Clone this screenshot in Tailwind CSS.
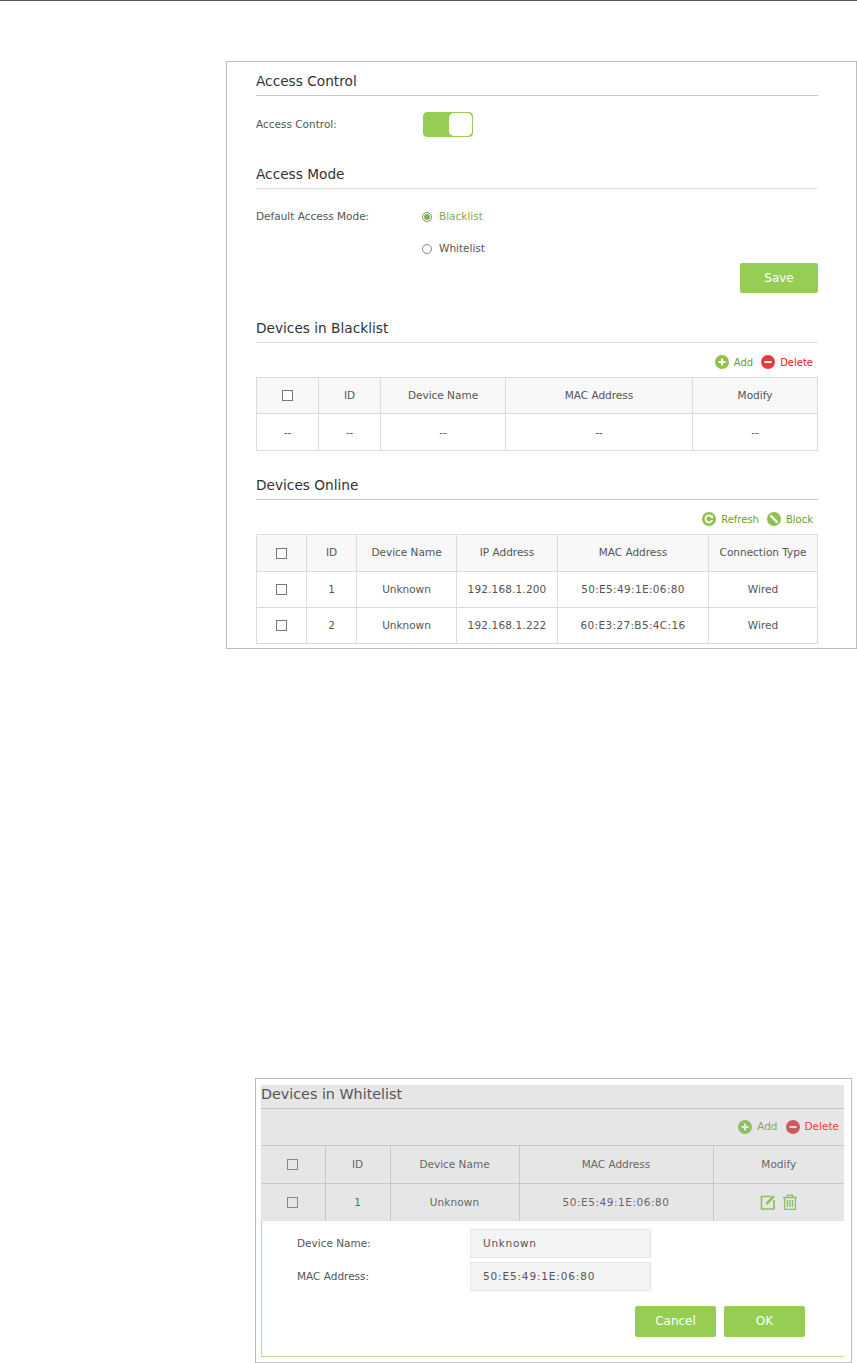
<!DOCTYPE html>
<html lang="en">
<head>
    <meta charset="UTF-8">
    <meta name="viewport" content="width=device-width, initial-scale=1.0">
    <title>Access Control</title>
    <script src="https://cdn.jsdelivr.net/npm/@tailwindcss/browser@4"></script>
</head>
<body class="bg-white w-[857px] h-[1363px] overflow-hidden font-['DejaVu_Sans',sans-serif] text-[10.5px] text-[#555]">
    <div class="h-px bg-[#555]"></div>

    <!-- first panel -->
    <section class="mt-[60px] ml-[226px] w-[631px] h-[588px] border border-[#bdbdbd] pl-[29px] pr-[38px]">
        <h2 class="h-[34px] pt-[9px] text-[13.7px] leading-[20px] text-[#333] border-b border-[#c8c8c8]">Access Control</h2>
        <div class="flex items-center mt-4 h-[25px]">
            <span class="w-[167px]">Access Control:</span>
            <div class="w-[50px] h-[25px] rounded-[4px] bg-[#95cd55] border border-[#95cd55] flex justify-end">
                <div class="w-[23px] h-full rounded-[5px] bg-white"></div>
            </div>
        </div>
        <h2 class="mt-[26px] h-[26px] pt-px text-[13.7px] leading-[20px] text-[#333] border-b border-[#dedede]">Access Mode</h2>
        <div class="flex items-center mt-[18px] h-5">
            <span class="w-[166px]">Default Access Mode:</span>
            <div class="w-[10px] h-[10px] rounded-full border border-[#888] flex items-center justify-center">
                <div class="w-[6px] h-[6px] rounded-full bg-[#7fb83e]"></div>
            </div>
            <span class="ml-[7px] text-[#7fae3c]">Blacklist</span>
        </div>
        <div class="flex items-center mt-3 h-5 pl-[166px]">
            <div class="w-[10px] h-[10px] rounded-full border border-[#888]"></div>
            <span class="ml-[7px]">Whitelist</span>
        </div>
        <div class="flex justify-end mt-1">
            <button class="w-[78px] h-[30px] rounded-[2px] bg-[#95cd55] text-white text-[12px]">Save</button>
        </div>
        <h2 class="mt-[25px] h-[25px] text-[13.7px] leading-[20px] text-[#333] border-b border-[#dedede]">Devices in Blacklist</h2>
        <div class="flex justify-end items-center h-[34px] pr-[5px] pt-1 text-[10px]">
            <svg class="w-[14px] h-[14px]" viewBox="0 0 14 14"><circle cx="7" cy="7" r="7" fill="#8fc14d"/><path d="M3.5 7h7M7 3.5v7" stroke="#fff" stroke-width="2"/></svg>
            <span class="ml-[5px] text-[#6f9f22]">Add</span>
            <svg class="ml-2 w-[14px] h-[14px]" viewBox="0 0 14 14"><circle cx="7" cy="7" r="7" fill="#e03c40"/><path d="M3.5 7h7" stroke="#fff" stroke-width="2"/></svg>
            <span class="ml-[5px] text-[#f01010]">Delete</span>
        </div>
        <table class="w-[562px] table-fixed text-center">
            <thead>
                <tr class="h-[36px] bg-[#f8f8f8]">
                    <th class="w-[62px] border border-[#dcdcdc] font-normal"><div class="w-[11px] h-[11px] mx-auto border border-[#777] bg-white"></div></th>
                    <th class="w-[62px] border border-[#dcdcdc] font-normal pt-px">ID</th>
                    <th class="w-[125px] border border-[#dcdcdc] font-normal pt-px">Device Name</th>
                    <th class="w-[187px] border border-[#dcdcdc] font-normal pt-px">MAC Address</th>
                    <th class="border border-[#dcdcdc] font-normal pt-px">Modify</th>
                </tr>
            </thead>
            <tbody>
                <tr class="h-[37px]">
                    <td class="border border-[#dcdcdc] pt-px">--</td>
                    <td class="border border-[#dcdcdc] pt-px">--</td>
                    <td class="border border-[#dcdcdc] pt-px">--</td>
                    <td class="border border-[#dcdcdc] pt-px">--</td>
                    <td class="border border-[#dcdcdc] pt-px">--</td>
                </tr>
            </tbody>
        </table>
        <h2 class="mt-6 h-[25px] text-[13.7px] leading-[20px] text-[#333] border-b border-[#c8c8c8]">Devices Online</h2>
        <div class="flex justify-end items-center h-[34px] pr-[5px] pt-1 text-[10px]">
            <svg class="w-[14px] h-[14px]" viewBox="0 0 14 14"><circle cx="7" cy="7" r="7" fill="#8fc14d"/><path d="M10.2 8.2A3.5 3.5 0 1 1 9.6 4.6" fill="none" stroke="#fff" stroke-width="1.8"/><path d="M8 5.6 11 6.2 10.8 3z" fill="#fff"/></svg>
            <span class="ml-[5px] text-[#6f9f22]">Refresh</span>
            <svg class="ml-2 w-[14px] h-[14px]" viewBox="0 0 14 14"><circle cx="7" cy="7" r="7" fill="#8fc14d"/><path d="M3.4 3.4 10.6 10.6" stroke="#fff" stroke-width="2.2"/></svg>
            <span class="ml-[5px] text-[#6f9f22]">Block</span>
        </div>
        <table class="w-[562px] table-fixed text-center">
            <thead>
                <tr class="h-[37px] bg-[#f8f8f8]">
                    <th class="w-[50px] border border-[#dcdcdc] font-normal"><div class="w-[11px] h-[11px] mx-auto border border-[#777] bg-white"></div></th>
                    <th class="w-[50px] border border-[#dcdcdc] font-normal">ID</th>
                    <th class="w-[100px] border border-[#dcdcdc] font-normal">Device Name</th>
                    <th class="w-[101px] border border-[#dcdcdc] font-normal">IP Address</th>
                    <th class="w-[151px] border border-[#dcdcdc] font-normal">MAC Address</th>
                    <th class="border border-[#dcdcdc] font-normal">Connection Type</th>
                </tr>
            </thead>
            <tbody>
                <tr class="h-[36px]">
                    <td class="border border-[#dcdcdc]"><div class="w-[11px] h-[11px] mx-auto border border-[#777] bg-white"></div></td>
                    <td class="border border-[#dcdcdc]">1</td>
                    <td class="border border-[#dcdcdc]">Unknown</td>
                    <td class="border border-[#dcdcdc] tracking-[0.15px]">192.168.1.200</td>
                    <td class="border border-[#dcdcdc] tracking-[0.35px]">50:E5:49:1E:06:80</td>
                    <td class="border border-[#dcdcdc]">Wired</td>
                </tr>
                <tr class="h-[36px]">
                    <td class="border border-[#dcdcdc]"><div class="w-[11px] h-[11px] mx-auto border border-[#777] bg-white"></div></td>
                    <td class="border border-[#dcdcdc]">2</td>
                    <td class="border border-[#dcdcdc]">Unknown</td>
                    <td class="border border-[#dcdcdc] tracking-[0.15px]">192.168.1.222</td>
                    <td class="border border-[#dcdcdc] tracking-[0.35px]">60:E3:27:B5:4C:16</td>
                    <td class="border border-[#dcdcdc]">Wired</td>
                </tr>
            </tbody>
        </table>
    </section>

    <!-- whitelist edit panel -->
    <section class="mt-[429px] ml-[255px] w-[597px] h-[285px] border border-[#bdbdbd] pt-[6px] pl-[5px] pr-[7px]">
        <div class="bg-[#e6e6e6]">
            <h2 class="h-[24px] text-[14.3px] leading-[18px] text-[#555] border-b border-[#c4c4c4]">Devices in Whitelist</h2>
            <div class="flex justify-end items-center h-[36px] pr-[5px]">
                <svg class="w-[14px] h-[14px]" viewBox="0 0 14 14"><circle cx="7" cy="7" r="7" fill="#8fbe63"/><path d="M3.5 7h7M7 3.5v7" stroke="#e6e6e6" stroke-width="2"/></svg>
                <span class="ml-[5px] text-[#86ab56]">Add</span>
                <svg class="ml-2 w-[14px] h-[14px]" viewBox="0 0 14 14"><circle cx="7" cy="7" r="7" fill="#cf5a5c"/><path d="M3.5 7h7" stroke="#e6e6e6" stroke-width="2"/></svg>
                <span class="ml-[5px] text-[#ee3a3a]">Delete</span>
            </div>
            <table class="w-[583px] table-fixed text-center text-[#666]">
                <thead>
                    <tr class="h-[38px]">
                        <th class="w-[64px] border-y border-r border-[#c8c8c8] font-normal"><div class="w-[11px] h-[11px] mx-auto border border-[#888] bg-[#e6e6e6]"></div></th>
                        <th class="w-[65px] border-y border-r border-[#c8c8c8] font-normal">ID</th>
                        <th class="w-[129px] border-y border-r border-[#c8c8c8] font-normal">Device Name</th>
                        <th class="w-[194px] border-y border-r border-[#c8c8c8] font-normal">MAC Address</th>
                        <th class="border-y border-[#c8c8c8] font-normal">Modify</th>
                    </tr>
                </thead>
                <tbody>
                    <tr class="h-[37px]">
                        <td class="border-r border-[#c8c8c8]"><div class="w-[11px] h-[11px] mx-auto border border-[#888] bg-[#e6e6e6]"></div></td>
                        <td class="border-r border-[#c8c8c8] pt-px">1</td>
                        <td class="border-r border-[#c8c8c8] pt-px tracking-[0.1px]">Unknown</td>
                        <td class="border-r border-[#c8c8c8] pt-px tracking-[0.55px]">50:E5:49:1E:06:80</td>
                        <td>
                            <div class="flex justify-center gap-[6px] pl-px">
                                <svg class="w-4 h-4" viewBox="0 0 16 16" fill="none" stroke="#8fbe63" stroke-width="1.6"><path d="M11 2.5H1.5v12.5h12.5V6"/><path d="M6.5 9.8 14 2.2" stroke-width="2.6"/></svg>
                                <svg class="w-4 h-4" viewBox="0 0 16 16" fill="none" stroke="#8fbe63" stroke-width="1.3"><path d="M1 3.5h14M5.5 3.5V1.2h5v2.3"/><path d="M2.6 3.5v11.8h10.8V3.5"/><path d="M5.5 6v7M8 6v7M10.5 6v7"/></svg>
                            </div>
                        </td>
                    </tr>
                </tbody>
            </table>
        </div>
        <div class="h-[136px] border-l border-b border-[#b9db8f] pt-2">
            <div class="flex items-center h-[29px] pl-[35px]">
                <span class="w-[173px] pt-[2px]">Device Name:</span>
                <div class="w-[181px] h-full pl-3 pt-[2px] flex items-center bg-[#f4f4f4] border border-[#e6e6e6] tracking-[0.7px]">Unknown</div>
            </div>
            <div class="flex items-center h-[29px] mt-1 pl-[35px]">
                <span class="w-[173px] pt-[2px]">MAC Address:</span>
                <div class="w-[181px] h-full pl-3 pt-[2px] flex items-center bg-[#f4f4f4] border border-[#e6e6e6] tracking-[0.85px]">50:E5:49:1E:06:80</div>
            </div>
            <div class="flex justify-end gap-2 mt-[15px] pr-[39px]">
                <button class="w-[81px] h-[31px] rounded-[2px] bg-[#95cd55] text-white text-[12px]">Cancel</button>
                <button class="w-[81px] h-[31px] rounded-[2px] bg-[#95cd55] text-white text-[12px]">OK</button>
            </div>
        </div>
    </section>
</body>
</html>
